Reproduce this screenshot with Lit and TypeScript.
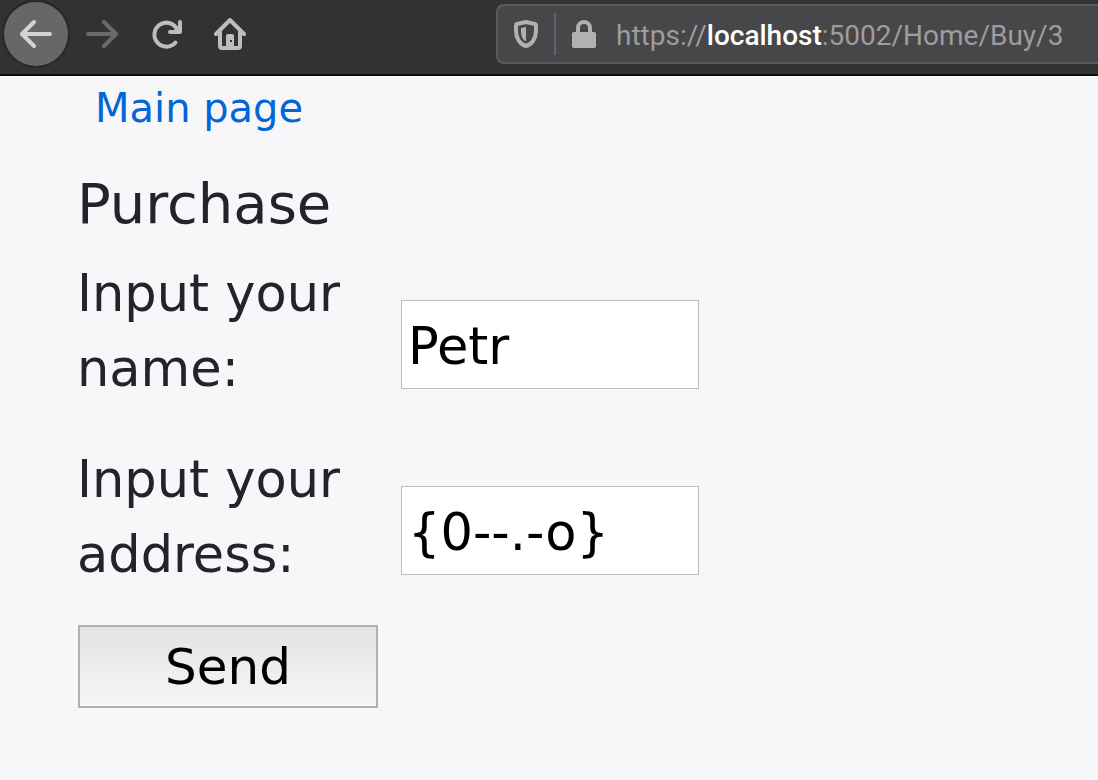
import { LitElement, html, css } from "lit";
import { customElement, state } from "lit/decorators.js";

@customElement("browser-bar")
class BrowserBar extends LitElement {
  static styles = css`
    :host { display: block; }
    .bar {
      display: flex;
      align-items: center;
      box-sizing: border-box;
      padding: 2px 0 8px 4px;
      background: #323234;
      border-bottom: 2px solid #0c0c0d;
    }
    .nav { display: flex; flex: none; }
    .tool {
      width: 64px;
      height: 64px;
      padding: 0;
      border: 0;
      border-radius: 50%;
      background: none;
      color: #bdbdbd;
      display: grid;
      place-items: center;
    }
    .back { margin-right: 2px; background: #676767; color: #d4d4d4; box-shadow: 0 0 0 2px #272728; }
    .tool:disabled { color: #6a6a6c; }
    svg { display: block; flex: none; }
    .stroke {
      fill: none;
      stroke: currentColor;
      stroke-width: 4;
      stroke-linecap: round;
      stroke-linejoin: round;
    }
    .address {
      flex: 1;
      min-width: 0;
      height: 56px;
      margin-left: 234px;
      padding-left: 16px;
      display: flex;
      align-items: center;
      border: 2px solid #5b5b5d;
      border-right: 0;
      border-radius: 8px 0 0 8px;
      background: #474749;
      color: #b1b1b3;
      white-space: nowrap;
      overflow: hidden;
    }
    .divider { width: 2px; height: 42px; margin: 0 16px; background: #5c6672; flex: none; }
    .url {
      margin-left: 20px;
      padding-top: 4px;
      font: 28px/40px Roboto, sans-serif;
      color: #9d9d9f;
    }
    .host { color: #fff; font-weight: 500; }
  `;

  render() {
    return html`
      <header class="bar">
        <nav class="nav" aria-label="Browser">
          <button class="tool back" aria-label="Back">
            <svg width="32" height="32" viewBox="0 0 32 32"><path class="stroke" d="M14 4 2 16 14 28M3 16H30" /></svg>
          </button>
          <button class="tool" aria-label="Forward" disabled>
            <svg width="32" height="32" viewBox="0 0 32 32"><path class="stroke" d="M18 4 30 16 18 28M29 16H2" /></svg>
          </button>
          <button class="tool" aria-label="Reload">
            <svg width="32" height="32" viewBox="0 0 32 32">
              <path class="stroke" d="M25.500 24.500A12 12 0 1 1 27 11M20 14H30V4" />
              <path fill="currentColor" d="M22 14 30 6V14Z" />
            </svg>
          </button>
          <button class="tool" aria-label="Home">
            <svg width="32" height="32" viewBox="0 0 32 32">
              <path class="stroke" d="M2 16 16 2 30 16M6 14V28Q6 30 8 30H24Q26 30 26 28V14" />
              <path fill="currentColor" fill-rule="evenodd" d="M14 16H18Q20 16 20 18V30H12V18Q12 16 14 16ZM16 22V24H18V22Z" />
            </svg>
          </button>
        </nav>
        <div class="address">
          <svg width="24" height="28" viewBox="0 0 24 28">
            <path class="stroke" d="M12 2 21 4Q22 4.200 22 6V11C22 18 18 24.500 12 26C6 24.500 2 18 2 11V6Q2 4.200 3 4Z" />
            <path fill="currentColor" d="M12 7V21.500C9 20 7 16 7 11.500V8Z" />
          </svg>
          <span class="divider"></span>
          <svg width="24" height="28" viewBox="0 0 24 28">
            <rect x="0" y="12" width="24" height="16" rx="2" fill="currentColor" />
            <path class="stroke" d="M6 14V8A6 6 0 0 1 18 8V14" />
          </svg>
          <span class="url">https://<span class="host">localhost</span>:5002/Home/Buy/3</span>
        </div>
      </header>
    `;
  }
}

@customElement("app-root")
class AppRoot extends LitElement {
  @state() name = "Petr";
  @state() address = "{0--.-o}";

  static styles = css`
    :host {
      display: block;
      min-height: 100vh;
      background: #f7f7fa;
      color: #212529;
      font-family: Verdana, "DejaVu Sans", sans-serif;
    }
    .page { padding: 2px 77px 72px; }
    .menu { padding: 0 18px; font-size: 40px; line-height: 60px; }
    .link { color: #0366d6; text-decoration: none; }
    h1 { margin: 32px 0 18px; font-size: 56px; line-height: 68px; font-weight: 400; }
    .fields { display: grid; gap: 36px; }
    .row { display: grid; grid-template-columns: 324px 298px; align-items: center; }
    .label { font-size: 51px; line-height: 75px; }
    .box {
      box-sizing: border-box;
      width: 100%;
      height: 89px;
      margin: 26px 0 0;
      padding: 4px 6px 0;
      border: 1px solid #bdbdbd;
      border-radius: 0;
      background: #fff;
      color: #000;
      font: inherit;
      font-size: 51px;
    }
    .send {
      display: block;
      width: 300px;
      height: 83px;
      margin: 33px 1px 0;
      padding: 0;
      border: 2px solid #b0b0b0;
      border-radius: 0;
      background: linear-gradient(#e3e3e3, #f6f6f6);
      color: #000;
      font: inherit;
      font-size: 50px;
    }
  `;

  render() {
    return html`
      <browser-bar></browser-bar>
      <main class="page">
        <nav class="menu"><a class="link" href="/">Main page</a></nav>
        <h1>Purchase</h1>
        <form @submit=${(e: Event) => e.preventDefault()}>
          <div class="fields">
            <div class="row">
              <label class="label" for="name">Input your name:</label>
              <input class="box" id="name" type="text" .value=${this.name} />
            </div>
            <div class="row">
              <label class="label" for="address">Input your address:</label>
              <input class="box" id="address" type="text" .value=${this.address} />
            </div>
          </div>
          <button class="send" type="submit">Send</button>
        </form>
      </main>
    `;
  }
}
